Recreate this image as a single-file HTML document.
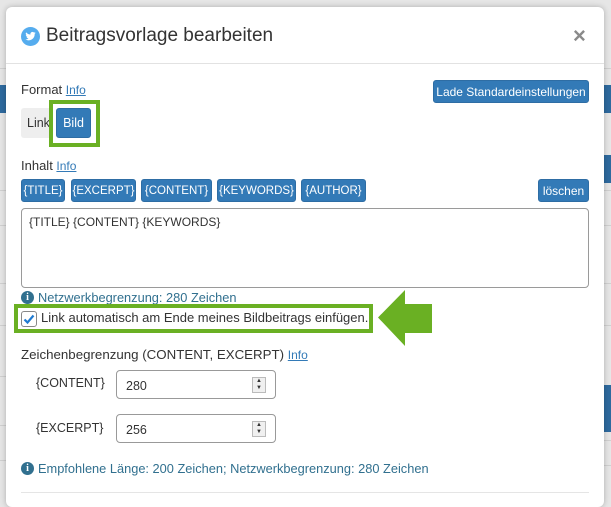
<!DOCTYPE html>
<html><head><meta charset="utf-8"><style>
*{box-sizing:border-box;margin:0;padding:0}
body{width:611px;height:498px;overflow:hidden;background:#e6e6e6;font-family:"Liberation Sans",sans-serif;font-size:12.5px;color:#333;position:relative}
.a{position:absolute}
.frag{position:absolute;background:#2e6a9e}
.hl{position:absolute;height:1px;background:#d0d0d0}
.modal{position:absolute;left:6px;top:7px;width:598px;height:500px;background:#fff;border-radius:6px;box-shadow:0 0 6px rgba(0,0,0,.25)}
.btn{position:absolute;background:#337ab7;color:#fff;border:1px solid #2e6da4;border-radius:3px;font-size:11.5px;display:flex;align-items:center;justify-content:center;white-space:nowrap}
.lnk{color:#337ab7;text-decoration:underline;font-size:12px}
.info{color:#31708f;font-size:12.8px;display:flex;align-items:center;white-space:nowrap}
.ic{display:inline-block;width:13px;height:13px;border-radius:50%;background:#31708f;color:#fff;font-size:10px;font-weight:bold;text-align:center;line-height:13px;font-family:"Liberation Serif",serif;margin-right:4px;flex:none}
.inp{position:absolute;border:1px solid #999;border-radius:4px;background:#fff}
.spin{position:absolute;right:9px;top:6px;width:14px;height:16px;border:1px solid #bbb;background:#f0f0f0;font-size:6px;line-height:7px;text-align:center;color:#333}
</style></head><body>
<div class="frag" style="left:0;top:85px;width:6px;height:28px"></div>
<div class="frag" style="left:604px;top:85px;width:7px;height:28px"></div>
<div class="frag" style="left:604px;top:155px;width:7px;height:28px"></div>
<div class="frag" style="left:604px;top:385px;width:7px;height:47px"></div>
<div class="hl" style="left:0;top:68px;width:6px"></div>
<div class="hl" style="left:0;top:190px;width:6px"></div>
<div class="hl" style="left:0;top:225px;width:6px"></div>
<div class="hl" style="left:0;top:283px;width:6px"></div>
<div class="hl" style="left:0;top:325px;width:6px"></div>
<div class="hl" style="left:0;top:376px;width:6px"></div>
<div class="hl" style="left:0;top:425px;width:6px"></div>
<div class="hl" style="left:0;top:460px;width:6px"></div>
<div class="hl" style="left:604px;top:68px;width:7px"></div>
<div class="hl" style="left:604px;top:190px;width:7px"></div>
<div class="hl" style="left:604px;top:225px;width:7px"></div>
<div class="hl" style="left:604px;top:283px;width:7px"></div>
<div class="hl" style="left:604px;top:325px;width:7px"></div>
<div class="hl" style="left:604px;top:440px;width:7px"></div>
<div class="hl" style="left:604px;top:465px;width:7px"></div>
<div class="modal"></div>

<svg class="a" style="left:21px;top:27px" width="19" height="19" viewBox="0 0 20 20"><circle cx="10" cy="10" r="10" fill="#55acee"/><path d="M15.5 6.3c-.4.2-.8.3-1.3.4.5-.3.8-.7 1-1.3-.4.3-.9.4-1.4.5a2.2 2.2 0 0 0-3.8 2A6.3 6.3 0 0 1 5.4 5.6a2.2 2.2 0 0 0 .7 3c-.4 0-.7-.1-1-.3 0 1.1.8 2 1.8 2.2-.3.1-.7.1-1 0 .3.9 1.1 1.5 2.1 1.5A4.5 4.5 0 0 1 4.7 13a6.3 6.3 0 0 0 9.7-5.6c.4-.3.8-.7 1.1-1.1z" fill="#fff"/></svg>
<div class="a" style="left:46px;top:25px;font-size:19px;color:#333">Beitragsvorlage bearbeiten</div>
<div class="a" style="left:573px;top:23px;font-size:22px;font-weight:bold;color:#8a8a8a">×</div>
<div class="a" style="left:6px;top:63px;width:598px;height:1px;background:#e2e2e2"></div>

<div class="a" style="left:21px;top:82px;font-size:13px">Format <span class="lnk">Info</span></div>
<div class="btn" style="left:433px;top:80px;width:156px;height:23px;font-size:12px">Lade Standardeinstellungen</div>
<div class="a" style="left:21px;top:108px;width:60px;height:30px;background:#eee;border-radius:3px;padding:8px 0 0 6px;font-size:12.5px">Link</div>
<div class="a" style="left:49px;top:100px;width:51px;height:47px;border:4px solid #6ab023;background:#fff"></div>
<div class="btn" style="left:56px;top:108px;width:35px;height:30px;font-size:12.5px">Bild</div>

<div class="a" style="left:21px;top:158px;font-size:13px">Inhalt <span class="lnk">Info</span></div>
<div class="btn" style="left:21px;top:179px;width:44px;height:23px">{TITLE}</div>
<div class="btn" style="left:71px;top:179px;width:65px;height:23px">{EXCERPT}</div>
<div class="btn" style="left:141px;top:179px;width:71px;height:23px">{CONTENT}</div>
<div class="btn" style="left:217px;top:179px;width:79px;height:23px">{KEYWORDS}</div>
<div class="btn" style="left:301px;top:179px;width:65px;height:23px">{AUTHOR}</div>
<div class="btn" style="left:538px;top:179px;width:51px;height:23px;font-size:12px">löschen</div>
<div class="a" style="left:21px;top:208px;width:568px;height:80px;border:1px solid #9a9a9a;border-radius:4px;padding:6px 7px;font-size:12px">{TITLE} {CONTENT} {KEYWORDS}</div>

<div class="a info" style="left:21px;top:290px;height:15px">
<span class="ic">i</span>Netzwerkbegrenzung: 280 Zeichen</div>
<div class="a" style="left:14px;top:304px;width:359px;height:29px;border:4px solid #6ab023;background:#fff"></div>
<div class="a" style="left:21px;top:311px;width:16px;height:16px;border:1px solid #888;border-radius:3px;background:#fff"></div>
<svg class="a" style="left:22px;top:312px" width="14" height="14" viewBox="0 0 14 14"><path d="M2.5 7.5l3 3 6-7" stroke="#1f7ad1" stroke-width="2.2" fill="none"/></svg>
<div class="a" style="left:41px;top:310px;font-size:13px;white-space:nowrap">Link automatisch am Ende meines Bildbeitrags einfügen.</div>
<svg class="a" style="left:378px;top:290px" width="54" height="56" viewBox="0 0 54 56"><path d="M0 27.5L27 0V14H54V43H27V56Z" fill="#6ab023"/></svg>

<div class="a" style="left:21px;top:347px;font-size:13.3px;white-space:nowrap">Zeichenbegrenzung (CONTENT, EXCERPT) <span class="lnk">Info</span></div>
<div class="a" style="left:36px;top:376px;font-size:12.5px">{CONTENT}</div>
<div class="inp" style="left:116px;top:370px;width:160px;height:29px"><span class="a" style="left:9px;top:8px;font-size:12.5px">280</span><div class="spin">▲<br>▼</div></div>
<div class="a" style="left:36px;top:421px;font-size:12.5px">{EXCERPT}</div>
<div class="inp" style="left:116px;top:414px;width:160px;height:29px"><span class="a" style="left:9px;top:8px;font-size:12.5px">256</span><div class="spin">▲<br>▼</div></div>

<div class="a info" style="left:21px;top:461px;height:15px"><span class="ic">i</span>Empfohlene Länge: 200 Zeichen; Netzwerkbegrenzung: 280 Zeichen</div>
<div class="a" style="left:21px;top:492px;width:568px;height:1px;background:#e5e5e5"></div>
</body></html>
